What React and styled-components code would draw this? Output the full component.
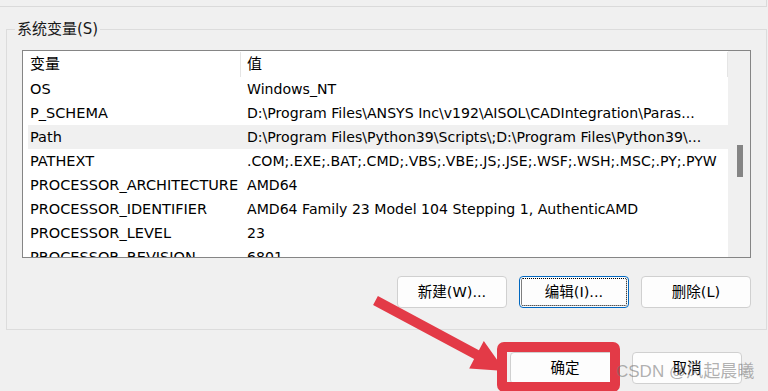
import styled, { createGlobalStyle } from "styled-components";

const GlobalStyle = createGlobalStyle`
    body {
        margin: 0;
        background: #f0f0f0;
        font-family: "DejaVu Sans", "Noto Sans CJK SC", sans-serif;
        color: #000;
    }
`;

const rows = [
    ["OS", "Windows_NT"],
    ["P_SCHEMA", "D:\\Program Files\\ANSYS Inc\\v192\\AISOL\\CADIntegration\\Paras..."],
    ["Path", "D:\\Program Files\\Python39\\Scripts\\;D:\\Program Files\\Python39\\...", true],
    ["PATHEXT", ".COM;.EXE;.BAT;.CMD;.VBS;.VBE;.JS;.JSE;.WSF;.WSH;.MSC;.PY;.PYW"],
    ["PROCESSOR_ARCHITECTURE", "AMD64"],
    ["PROCESSOR_IDENTIFIER", "AMD64 Family 23 Model 104 Stepping 1, AuthenticAMD"],
    ["PROCESSOR_LEVEL", "23"],
    ["PROCESSOR_REVISION", "6801"],
];

export default function App() {
    return (
        <Page>
            <GlobalStyle />
            <TopBox />
            <Group>
                <Legend>系统变量(S)</Legend>
                <List>
                    <Body>
                        <Header>
                            <HeadCell $w="218px">变量</HeadCell>
                            <HeadCell>值</HeadCell>
                        </Header>
                        {rows.map(([name, value, sel]) => (
                            <Row key={name} $selected={sel}>
                                <NameCell>{name}</NameCell>
                                <ValueCell>{value}</ValueCell>
                            </Row>
                        ))}
                    </Body>
                    <Scrollbar>
                        <Thumb />
                    </Scrollbar>
                </List>
                <Buttons>
                    <Button>新建(W)...</Button>
                    <Button $focused>编辑(I)...</Button>
                    <Button>删除(L)</Button>
                </Buttons>
            </Group>
            <Footer>
                <Button>确定</Button>
                <Button>取消</Button>
            </Footer>

            <Arrow width="768" height="391" viewBox="0 0 768 391">
                <polygon
                    points="377.9,296.1 478.9,350.3 483.8,341 505,371 469.2,368.4 474.1,359.1 373.1,304.9"
                    fill="#e33a47"
                />
            </Arrow>
            <Highlight />
            <Watermark>CSDN @风起晨曦</Watermark>
        </Page>
    );
}

const Page = styled.div`
    position: relative;
    width: 768px;
    height: 391px;
    overflow: hidden;
`;

const TopBox = styled.div`
    width: 766px;
    height: 6px;
    border-right: 1px solid #dadada;
    border-bottom: 1px solid #dadada;
`;

const Group = styled.fieldset`
    box-sizing: border-box;
    width: 761px;
    margin: 13px 0 0 6px;
    padding: 0 15px 21px 15px;
    border: 1px solid #dcdcdc;
    min-width: 0;
`;

const Legend = styled.legend`
    margin-left: -7px;
    padding: 0 2px;
    font-size: 15px;
    line-height: 18px;
    color: #1a1a1a;
`;

const List = styled.div`
    box-sizing: border-box;
    display: flex;
    width: 729px;
    height: 208px;
    margin-top: 12px;
    border: 1px solid #858585;
    background: #fff;
    overflow: hidden;
`;

const Body = styled.div`
    width: 705px;
    display: flex;
    flex-direction: column;
    overflow: hidden;
`;

const Header = styled.div`
    display: flex;
    height: 26px;
    flex-shrink: 0;
`;

const HeadCell = styled.div`
    box-sizing: border-box;
    width: ${(p) => p.$w || "auto"};
    flex: ${(p) => (p.$w ? "none" : "1")};
    margin-top: 1px;
    padding-left: ${(p) => (p.$w ? "7px" : "6px")};
    border-right: 1px solid #e5e5e5;
    font-size: 15px;
    line-height: 25px;
`;

const Row = styled.div`
    display: flex;
    flex-shrink: 0;
    height: 24px;
    margin-left: 5px;
    background: ${(p) => (p.$selected ? "#f0f0f0" : "transparent")};
    line-height: 25px;
    white-space: nowrap;
`;

const NameCell = styled.div`
    width: 212px;
    flex: none;
    padding-left: 2px;
    box-sizing: border-box;
    font-size: 14.5px;
    overflow: hidden;
`;

const ValueCell = styled.div`
    flex: 1;
    padding-left: 7px;
    font-size: 14.1px;
    overflow: hidden;
`;

const Scrollbar = styled.div`
    width: 22px;
    flex: none;
    background: #f0f0f0;
    display: flex;
    flex-direction: column;
    align-items: center;
`;

const Thumb = styled.div`
    width: 6px;
    height: 32px;
    margin-top: 94px;
    margin-left: 1px;
    background: #858585;
`;

const Buttons = styled.div`
    display: flex;
    justify-content: flex-end;
    gap: 12px;
    margin-top: 18px;
`;

const Button = styled.div`
    position: relative;
    box-sizing: border-box;
    width: 110px;
    height: 32px;
    border: 1px solid ${(p) => (p.$focused ? "#0067c0" : "#d0d0d0")};
    border-radius: 4px;
    background: #fdfdfd;
    font-size: 14.5px;
    line-height: 30px;
    text-align: center;
    color: #000;

    &::after {
        content: "";
        display: ${(p) => (p.$focused ? "block" : "none")};
        position: absolute;
        inset: 1px;
        border: 1px dotted #000;
        border-radius: 2px;
    }
`;

const Footer = styled.div`
    display: flex;
    justify-content: flex-end;
    gap: 12px;
    margin-top: 22px;
    padding-right: 26px;
`;

const Arrow = styled.svg`
    position: absolute;
    left: 0;
    top: 0;
    pointer-events: none;
`;

const Highlight = styled.div`
    position: absolute;
    left: 497px;
    top: 342px;
    width: 123px;
    height: 50px;
    box-sizing: border-box;
    border: 10px solid #e33a47;
    border-radius: 7px;
    pointer-events: none;
`;

const Watermark = styled.div`
    position: absolute;
    left: 616px;
    top: 361px;
    font-family: "Liberation Sans", "Noto Sans CJK SC", sans-serif;
    font-size: 17px;
    line-height: 22px;
    color: rgba(110, 110, 110, 0.55);
    white-space: nowrap;
    pointer-events: none;
`;
